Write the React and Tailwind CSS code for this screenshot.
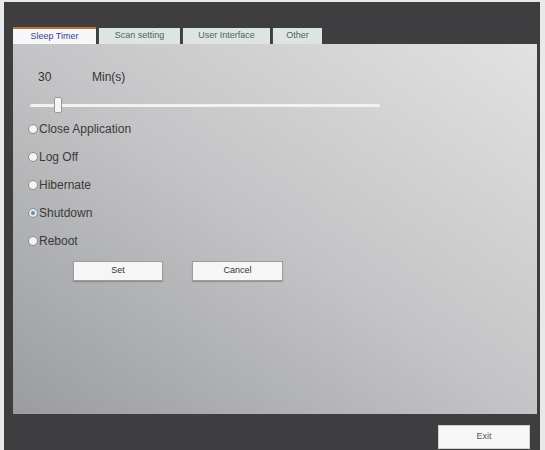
export default function App() {
  const options = ["Close Application", "Log Off", "Hibernate", "Shutdown", "Reboot"];
  const tabs = [
    { label: "Scan setting", w: "w-[82px]" },
    { label: "User Interface", w: "w-[88px]" },
    { label: "Other", w: "w-[50px]" },
  ];

  return (
    <div className="w-[545px] h-[450px] bg-[#e9e9ea] pl-[4px] pr-[5px] pt-[2px] font-['Liberation_Sans',Arial,sans-serif]">
      <div className="h-full bg-[#3e3e41] pl-[9px] pr-[3px] flex flex-col">
        {/* Tabs */}
        <div className="mt-[25px] flex items-end h-[17px] text-[9px]">
          <div className="w-[83px] h-[17px] bg-[#f7f7fa] text-[#3b3b8c] flex items-center justify-center border-t-2 border-[#b9763a]">
            Sleep Timer
          </div>
          {tabs.map((t) => (
            <div
              key={t.label}
              className={`${t.w} h-[16px] ml-[2px] bg-[#dde5e2] text-[#55605c] flex items-center justify-center border-l border-[#4a4a4a]`}
            >
              {t.label}
            </div>
          ))}
        </div>

        {/* Panel */}
        <div className="h-[370px] bg-gradient-to-bl from-[#e2e2e2] via-[#c4c4c6] to-[#9a9c9f] pl-[15px] pt-[26px] text-[12px] text-[#333]">
          <div className="flex items-center h-[14px] pl-[10px]">
            <span className="w-[54px]">30</span>
            <span>Min(s)</span>
          </div>

          <div className="relative mt-[13px] h-[16px] w-[350px] ml-[2px] flex items-center">
            <div className="h-[3px] w-full bg-[#f2f2f2] rounded-full" />
            <div className="absolute left-[24px] top-0 w-[8px] h-[16px] bg-[#f5f5f5] border border-[#9a9a9a] rounded-[2px]" />
          </div>

          <div className="mt-[2px] flex flex-col">
            {options.map((o) => (
              <label key={o} className="h-[28px] flex items-center gap-[1px]">
                <span
                  className={`w-[10px] h-[10px] rounded-full border border-[#8a8a8a] flex items-center justify-center ${
                    o === "Shutdown" ? "bg-[#dfe8ee]" : "bg-[#f4f4f4]"
                  }`}
                >
                  {o === "Shutdown" && <span className="w-[4px] h-[4px] rounded-full bg-[#6f8fa3]" />}
                </span>
                <span className="text-[#3a3a3a]">{o}</span>
              </label>
            ))}
          </div>

          <div className="mt-[6px] flex pl-[45px] gap-[29px] text-[9px] text-[#333]">
            <button className="w-[90px] h-[20px] bg-[#f6f6f6] border border-[#9c9c9c] shadow-[0_1px_1px_rgba(0,0,0,0.2)]">
              Set
            </button>
            <button className="w-[91px] h-[20px] bg-[#f6f6f6] border border-[#9c9c9c] shadow-[0_1px_1px_rgba(0,0,0,0.2)]">
              Cancel
            </button>
          </div>
        </div>

        {/* Footer */}
        <div className="flex justify-end pt-[11px] pr-[7px]">
          <button className="w-[92px] h-[24px] bg-[#f7f7f8] border border-[#cfcfcf] text-[9px] text-[#555]">
            Exit
          </button>
        </div>
      </div>
    </div>
  );
}
